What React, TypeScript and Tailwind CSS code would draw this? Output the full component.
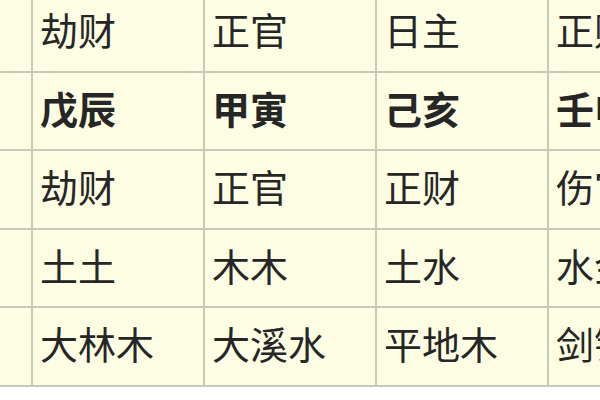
import React from "react";

// one row per line of the chart; first column is the (cut off) label column
const rows: { cells: string[]; bold?: boolean }[] = [
  { cells: ["", "劫财", "正官", "日主", "正财"] },
  { cells: ["", "戊辰", "甲寅", "己亥", "壬申"], bold: true },
  { cells: ["", "劫财", "正官", "正财", "伤官"] },
  { cells: ["", "土土", "木木", "土水", "水金"] },
  { cells: ["", "大林木", "大溪水", "平地木", "剑锋金"] },
];

const App = () => {
  return (
    <div
      className="w-[600px] h-[400px] overflow-hidden bg-white"
      style={{ fontFamily: '"Noto Sans CJK SC", "Noto Sans", sans-serif' }}
    >
      <table className="table-fixed border-collapse bg-[#fdfde3] ml-[-141px] mt-[-8px] w-[862px]">
        <tbody>
          {rows.map((row, i) => (
            <tr key={i} className="h-[78.5px]">
              {row.cells.map((c, j) => (
                <td
                  key={j}
                  className={`w-[172px] border-2 border-[#c9c9b9] pl-[7px] pb-[6px] align-middle text-[38px] leading-none whitespace-nowrap overflow-hidden text-[#262626] ${
                    row.bold ? "font-bold" : "font-normal"
                  }`}
                >
                  {c}
                </td>
              ))}
            </tr>
          ))}
        </tbody>
      </table>
    </div>
  );
};

export default App;
